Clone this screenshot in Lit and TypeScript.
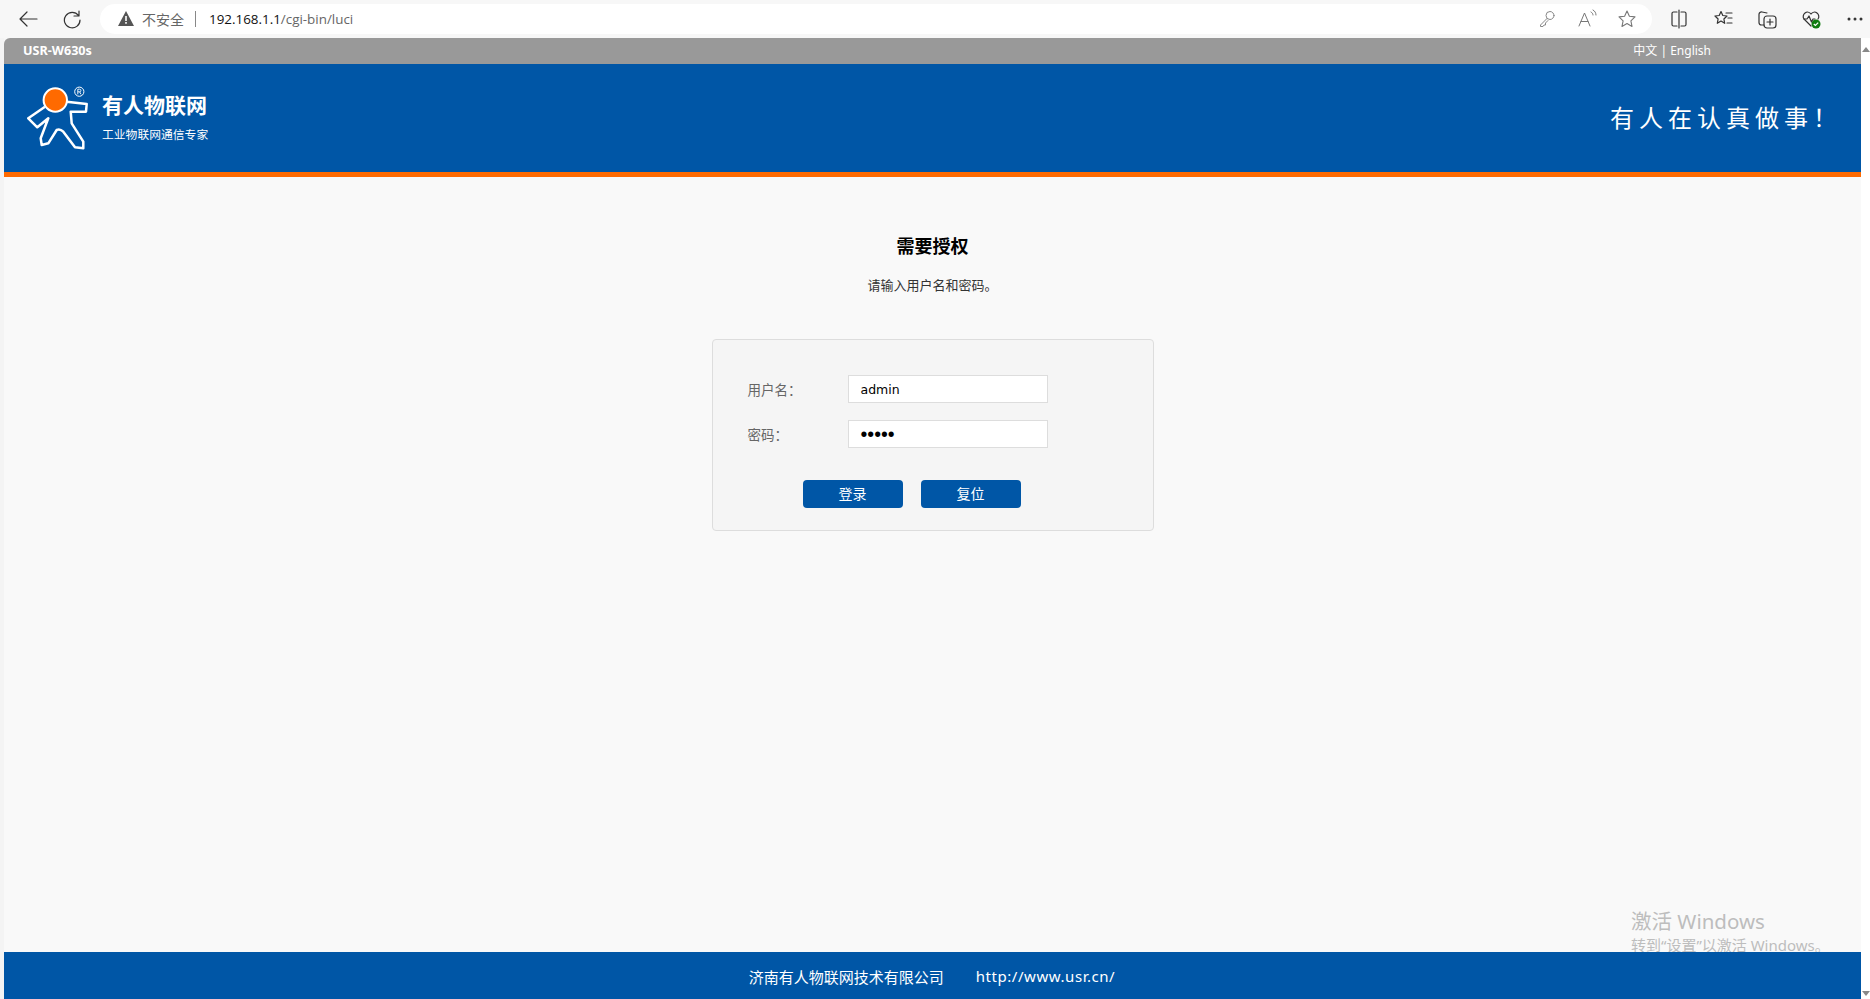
import { LitElement, html, css, svg } from "lit";
import { customElement } from "lit/decorators.js";

const stroke = (d: unknown, w = 1.2, c = "#333") =>
  html`<svg width="20" height="20" viewBox="0 0 20 20" fill="none" stroke=${c} stroke-width=${w} stroke-linecap="round" stroke-linejoin="round">${d}</svg>`;

@customElement("app-root")
export class AppRoot extends LitElement {
  static styles = css`
    :host { display: block; width: 1870px; height: 999px; overflow: hidden; position: relative; background: #f7f7f7;
      font-family: "Noto Sans", "Noto Sans CJK SC", sans-serif; font-size: 12px; }
    * { box-sizing: border-box; }
    .toolbar { height: 38px; display: flex; align-items: center; background: #f7f7f7; }
    .nav { width: 20px; height: 20px; display: flex; }
    .back { margin-left: 18px; margin-top: -1px; }
    .reload { margin-left: 24px; margin-top: -1px; }
    .url { margin-left: 18px; width: 1552px; height: 30px; margin-top: -1px; background: #fff; border-radius: 15px; display: flex; align-items: center; padding-left: 18px; }
    .warn { color: #666; font-size: 14px; margin-left: 8px; }
    .sep { width: 1px; height: 16px; background: #888; margin: 0 13px 0 11px; }
    .host { color: #111; font-family: "Open Sans", sans-serif; font-size: 13.4px; }
    .path { color: #666; font-family: "Open Sans", sans-serif; font-size: 13.4px; }
    .url-icons { margin-left: auto; display: flex; gap: 20px; margin-right: 15px; }
    .tools { display: flex; gap: 24px; margin-left: 17px; }
    .tool { display: flex; width: 20px; height: 20px; position: relative; }
    .main { height: 961px; display: flex; }
    .gutter { width: 4px; background: #f4f4f4; }
    .page { width: 1857px; height: 961px; display: flex; flex-direction: column; background: #f9f9f9; border-top-left-radius: 6px; overflow: hidden; }
    .top { height: 26px; background: #999; color: #fff; display: flex; align-items: center; justify-content: space-between; padding: 0 150px 2px 19px; }
    .model { font-weight: 700; font-size: 12.6px; }
    .lang { font-size: 12px; }
    .banner { height: 108px; background: #0056a6; display: flex; align-items: center; color: #fff; padding: 0 19px 0 23px; }
    .logo { width: 62px; height: 66px; }
    .brand { margin-left: 13px; display: flex; flex-direction: column; gap: 7px; margin-top: -3px; }
    .brand b { font-size: 21px; line-height: 28px; font-weight: 700; }
    .brand span { font-size: 11.8px; line-height: 16px; }
    .slogan { margin-left: auto; font-size: 24px; letter-spacing: 5px; margin-top: -3px; }
    .rule { height: 5px; background: #ff6a00; }
    .content { flex: 1; display: flex; flex-direction: column; align-items: center; }
    h1 { margin: 57px 0 0; font-size: 18px; line-height: 24px; font-weight: 700; color: #000; }
    .hint { margin: 17px 0 0; font-size: 13px; line-height: 20px; color: #333; }
    .card { margin-top: 44px; width: 442px; height: 192px; background: #f5f5f5; border: 1px solid #ddd; border-radius: 4px; padding: 35px 35px 0; display: flex; flex-direction: column; }
    .row { display: flex; align-items: center; height: 28px; margin-bottom: 17px; color: #666; font-size: 13.5px; }
    .row label { width: 100px; }
    .input { width: 200px; height: 28px; background: #fff; border: 1px solid #ddd; color: #000; padding-left: 12px; display: flex; align-items: center; font-family: "DejaVu Sans", sans-serif; font-size: 12.5px; }
    .pw { font-family: "Liberation Sans", sans-serif; font-size: 19.5px; line-height: 26px; }
    .buttons { display: flex; gap: 18px; margin: 15px 0 0 55px; }
    .btn { width: 100px; height: 28px; background: #0056a6; color: #fff; border: 0; border-radius: 4px; font: inherit; font-size: 14px; padding: 0 0 2px; }
    .footer { position: relative; z-index: 1; height: 47px; background: #0056a6; color: #fff; display: flex; align-items: center; justify-content: center; gap: 32px; font-size: 15px; padding: 1px 1px 0 0; }
    .site { letter-spacing: .55px; }
    .bar { width: 9px; background: #fff; position: relative; }
    .bar i { position: absolute; left: 1px; width: 0; height: 0; border-left: 4px solid transparent; border-right: 4px solid transparent; }
    .up { top: 9px; border-bottom: 5px solid #888; }
    .down { bottom: 3px; border-top: 5px solid #888; }
    .wm { position: absolute; left: 1631px; top: 907px; color: #bdbdbd; pointer-events: none; white-space: nowrap; }
    .wm div:first-child { font-size: 20.5px; line-height: 28px; }
    .wm div:last-child { font-size: 15px; line-height: 20px; }
  `;

  render() {
    return html`
      <div class="toolbar">
        <span class="nav back">${stroke(svg`<path d="M19 10H2M9 3 2 10l7 7"/>`)}</span>
        <span class="nav reload">${stroke(svg`<path d="M16.500 6.500A7.800 7.800 0 1 0 18 11M17 2v5h-5"/>`)}</span>
        <div class="url">
          <svg width="16" height="15" viewBox="0 0 16 15"><path d="M8 0 16 15H0Z" fill="#555"/><path d="M7.200 5h1.600v5H7.200zM7.200 11h1.600v1.800H7.200z" fill="#fff"/></svg>
          <span class="warn">不安全</span><span class="sep"></span>
          <span class="host">192.168.1.1</span><span class="path">/cgi-bin/luci</span>
          <div class="url-icons">
            <span class="tool">${stroke(svg`<circle cx="13" cy="6.500" r="4"/><path d="M10 9.500 3.500 16v1.500H6l1-1.500h1.500V14l2.500-2.500"/>`, 1, "#888")}</span>
            <span class="tool">${stroke(svg`<path d="M2 17 7.500 4 13 17M4 12.500h7M14 3c1.200.6 2 1.800 2 3M16 1c2 1 3 3 3 5"/>`, 1, "#777")}</span>
            <span class="tool">${stroke(svg`<path d="m10 2 2.400 5.200 5.600.7-4.100 3.900 1.100 5.600-5-2.800-5 2.800 1.100-5.600L2 7.900l5.600-.7Z"/>`, 1.1, "#777")}</span>
          </div>
        </div>
        <div class="tools">
          <span class="tool">${stroke(svg`<path d="M8 3H4.500A1.500 1.500 0 0 0 3 4.500v11A1.500 1.500 0 0 0 4.500 17H8M12 3h3.500A1.500 1.500 0 0 1 17 4.500v11a1.500 1.500 0 0 1-1.500 1.500H12M10 1v18"/>`)}</span>
          <span class="tool">${stroke(svg`<path d="m8 2.500 1.800 4 4.200.5-3.100 3 .8 4.300L8 12l-3.700 2.300.8-4.300L2 7l4.200-.5ZM13 4h6M15 9h4M14 14h5"/>`)}</span>
          <span class="tool">${stroke(svg`<path d="M7 16H4.500A2.500 2.500 0 0 1 2 13.500v-8A2.500 2.500 0 0 1 5 3l5 1"/><rect x="7" y="7" width="12" height="12" rx="3"/><path d="M13 10v6M10 13h6"/>`)}</span>
          <span class="tool">
            ${stroke(svg`<path d="M10 17 3 10a4.300 4.300 0 0 1 7-5 4.300 4.300 0 0 1 7 5"/><path d="M3 10h3l2-3 2.500 6 1.500-3h2"/>`)}
            <svg style="position:absolute;left:10px;top:10px" width="10" height="10" viewBox="0 0 10 10"><circle cx="5" cy="5" r="4.500" fill="#107c10"/><path d="m2.800 5 1.600 1.500 2.800-2.800" fill="none" stroke="#fff" stroke-width="1.200"/></svg>
          </span>
          <span class="tool">${stroke(svg`<circle cx="4" cy="10" r=".9" fill="#333"/><circle cx="10" cy="10" r=".9" fill="#333"/><circle cx="16" cy="10" r=".9" fill="#333"/>`)}</span>
        </div>
      </div>
      <div class="main">
        <div class="gutter"></div>
        <div class="page">
          <div class="top"><span class="model">USR-W630s</span><span class="lang">中文 | English</span></div>
          <div class="banner">
            <svg class="logo" viewBox="0 0 62 66" fill="none">
              <path d="M18 21.700 1.300 33.300l9 9 11-9-7.600 20 1 6.700 6.600-1.700 8.400-13.300Q33 43.500 36.300 46.700L48 62.300l8.300 1v-6.600L44.700 38.300l-1-11.600H59l.7-7.700-20-2.300" stroke="#fff" stroke-width="2.500" stroke-linejoin="round"/>
              <circle cx="28.300" cy="15" r="11.700" fill="#ff6a00" stroke="#fff" stroke-width="2"/>
              <circle cx="52.300" cy="6.700" r="4.600" stroke="#fff" stroke-width="1"/>
              <path d="M50.800 9.300V4.200h1.800a1.300 1.300 0 0 1 0 2.600h-1.800M52.600 6.800 54 9.300" stroke="#fff" stroke-width=".9"/>
            </svg>
            <div class="brand"><b>有人物联网</b><span>工业物联网通信专家</span></div>
            <span class="slogan">有人在认真做事！</span>
          </div>
          <div class="rule"></div>
          <div class="content">
            <h1>需要授权</h1>
            <p class="hint">请输入用户名和密码。</p>
            <div class="card">
              <div class="row"><label>用户名：</label><div class="input">admin</div></div>
              <div class="row"><label>密码：</label><div class="input pw">•••••</div></div>
              <div class="buttons"><button class="btn">登录</button><button class="btn">复位</button></div>
            </div>
          </div>
          <div class="footer"><span>济南有人物联网技术有限公司</span><span class="site">http://www.usr.cn/</span></div>
        </div>
        <div class="bar"><i class="up"></i><i class="down"></i></div>
      </div>
      <div class="wm"><div>激活 Windows</div><div>转到“设置”以激活 Windows。</div></div>
    `;
  }
}
